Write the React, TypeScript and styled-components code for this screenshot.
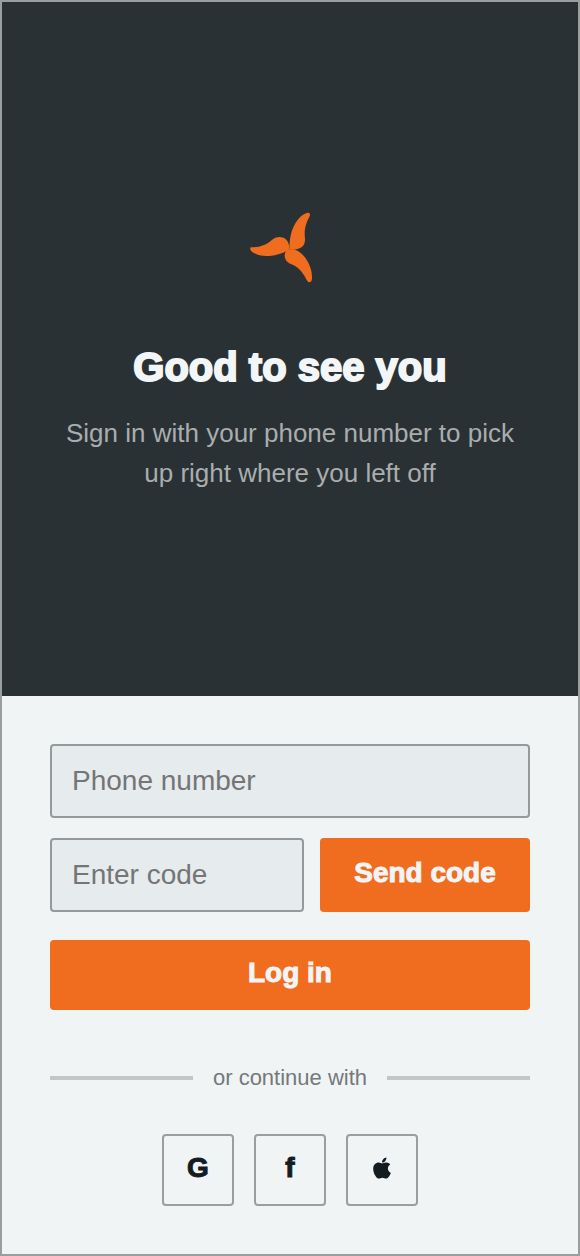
import React from "react";
import styled, { createGlobalStyle } from "styled-components";
import { FaApple } from "react-icons/fa";

const GlobalStyle = createGlobalStyle`
  *, *::before, *::after { box-sizing: border-box; }
  body {
    margin: 0;
    background: #f0f4f5;
    font-family: "Liberation Sans", Arial, sans-serif;
  }
`;

const Screen = styled.main`
  display: flex;
  flex-direction: column;
  min-height: 100vh;
  border: 2px solid #9a9e9e;
  background: #f0f4f5;
`;

const Hero = styled.header`
  flex: 1;
  display: flex;
  flex-direction: column;
  align-items: center;
  justify-content: center;
  padding: 48px;
  background: #2a3134;
  text-align: center;
`;

const Logo = styled.svg`
  width: 80px;
  height: 80px;
  margin-bottom: 58px;
  fill: #f06c1e;
`;

const Title = styled.h1`
  margin: 0 0 22px;
  color: #f2f6f7;
  font-size: 40px;
  line-height: 48px;
  font-weight: 700;
  -webkit-text-stroke: 2px currentColor;
`;

const Subtitle = styled.p`
  margin: 0;
  max-width: 480px;
  color: #a9adaf;
  font-size: 26px;
  line-height: 40px;
`;

const Form = styled.form`
  display: flex;
  flex-direction: column;
  padding: 48px;
`;

const CodeRow = styled.div`
  display: flex;
  gap: 16px;
  margin: 20px 0 28px;
`;

const Field = styled.input`
  flex: 1 1 auto;
  min-width: 0;
  width: 100%;
  height: 74px;
  padding: 0 20px;
  border: 2px solid #959999;
  border-radius: 4px;
  background: #e6ebed;
  color: #151c21;
  font: inherit;
  font-size: 28px;

  &::placeholder {
    color: #757575;
    opacity: 1;
  }
`;

const PrimaryButton = styled.button<{ $tall?: boolean }>`
  flex: none;
  min-width: 210px;
  height: ${({ $tall }) => ($tall ? 74 : 70)}px;
  padding: 0 32px 4px;
  border: 0;
  border-radius: 4px;
  background: #f06c1e;
  color: #f2f5f7;
  font: inherit;
  font-size: 28px;
  font-weight: 700;
  white-space: nowrap;
  cursor: pointer;
  -webkit-text-stroke: 1px currentColor;
`;

const Divider = styled.div`
  display: flex;
  align-items: center;
  gap: 20px;
  margin: 54px 0 42px;
  color: #75797b;
  font-size: 22px;
  line-height: 28px;

  &::before,
  &::after {
    content: "";
    flex: 1;
    height: 4px;
    background: #c4c6c6;
  }
`;

const Socials = styled.div`
  display: flex;
  justify-content: center;
  gap: 20px;
`;

const SocialButton = styled.button`
  display: flex;
  align-items: center;
  justify-content: center;
  width: 72px;
  height: 72px;
  padding: 0 0 4px;
  border: 2px solid #9a9e9e;
  border-radius: 4px;
  background: transparent;
  color: #151c21;
  font: inherit;
  font-size: 28px;
  font-weight: 700;
  cursor: pointer;
  -webkit-text-stroke: 1px currentColor;

  svg {
    width: 24px;
    height: 24px;
    stroke-width: 0;
  }
`;

export default function App() {
  return (
    <>
      <GlobalStyle />
      <Screen>
        <Hero>
          <Logo viewBox="60 15 240 240" aria-hidden="true">
            <path d="M65 142C90 142 106 135 123 122C136 111 148 109 160 113C171 117 177 128 179 146L175 151C155 163 132 168 108 168C91 168 75 163 66 155C59 149 59 142 65 142Z" />
            <path d="M179 148C177 120 183 91 197 68C207 51 220 41 232 38C240 37 242 43 239 49C228 69 223 86 224 105C226 119 226 131 218 139C208 148 193 151 179 148Z" />
            <path d="M177 148C197 145 213 156 227 175C240 193 247 215 246 236C245 247 237 250 232 243C221 221 208 202 188 194C173 189 164 179 164 167C164 157 169 150 177 148Z" />
          </Logo>
          <Title>Good to see you</Title>
          <Subtitle>Sign in with your phone number to pick up right where you left off</Subtitle>
        </Hero>
        <Form onSubmit={(event) => event.preventDefault()}>
          <Field type="tel" aria-label="Phone number" placeholder="Phone number" />
          <CodeRow>
            <Field type="text" inputMode="numeric" aria-label="Enter code" placeholder="Enter code" />
            <PrimaryButton type="button" $tall>Send code</PrimaryButton>
          </CodeRow>
          <PrimaryButton type="submit">Log in</PrimaryButton>
          <Divider>or continue with</Divider>
          <Socials>
            <SocialButton type="button" aria-label="Continue with Google">G</SocialButton>
            <SocialButton type="button" aria-label="Continue with Facebook">f</SocialButton>
            <SocialButton type="button" aria-label="Continue with Apple"><FaApple /></SocialButton>
          </Socials>
        </Form>
      </Screen>
    </>
  );
}
